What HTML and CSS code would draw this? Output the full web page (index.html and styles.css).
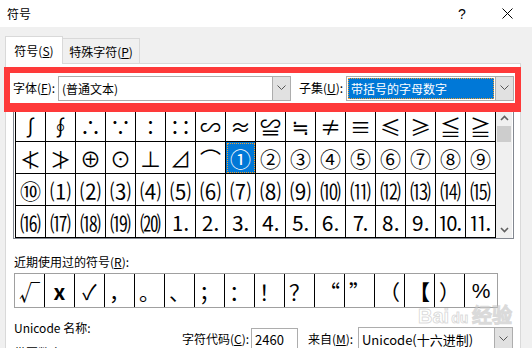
FILE: index.html
```html
<!DOCTYPE html>
<html lang="zh-CN">
<head>
  <meta charset="UTF-8">
  <title>符号</title>
  <link rel="stylesheet" href="styles.css">
</head>
<body>
  <div class="titlebar">
    <span class="title">符号</span>
    <span class="help">?</span>
    <span class="close">
      <svg width="11" height="11" viewBox="0 0 11 11"><path d="M0.5 0.5L10.5 10.5M10.5 0.5L0.5 10.5" stroke="#000" stroke-width="1"/></svg>
    </span>
  </div>

  <div class="tabs">
    <div class="tab active">符号(<u>S</u>)</div>
    <div class="tab">特殊字符(<u>P</u>)</div>
  </div>

  <div class="panel">
    <div class="font-row">
      <span class="lbl font-lbl">字体(<u>F</u>):</span>
      <div class="combo font-combo">
        <span class="combo-text">(普通文本)</span>
        <span class="combo-btn"><svg width="9" height="6" viewBox="0 0 9 6"><path d="M0.5 0.5L4.5 4.5L8.5 0.5" fill="none" stroke="#555" stroke-width="1"/></svg></span>
      </div>
      <span class="lbl subset-lbl">子集(<u>U</u>):</span>
      <div class="combo subset-combo">
        <span class="combo-text"><span class="picked">带括号的字母数字</span></span>
        <span class="combo-btn"><svg width="9" height="6" viewBox="0 0 9 6"><path d="M0.5 0.5L4.5 4.5L8.5 0.5" fill="none" stroke="#555" stroke-width="1"/></svg></span>
      </div>
    </div>

    <div class="symbol-box">
      <div class="symbol-grid">
        <span>∫</span><span>∮</span><span>∴</span><span>∵</span><span>∶</span><span>∷</span><span>∽</span><span>≈</span>
        <span>≌</span><span>≒</span><span>≠</span><span>≡</span><span>≤</span><span>≥</span><span>≦</span><span>≧</span>
        <span>≮</span><span>≯</span><span>⊕</span><span>⊙</span><span>⊥</span><span>⊿</span><span>⌒</span><span class="current">①</span>
        <span>②</span><span>③</span><span>④</span><span>⑤</span><span>⑥</span><span>⑦</span><span>⑧</span><span>⑨</span>
        <span>⑩</span><span>⑴</span><span>⑵</span><span>⑶</span><span>⑷</span><span>⑸</span><span>⑹</span><span>⑺</span>
        <span>⑻</span><span>⑼</span><span>⑽</span><span>⑾</span><span>⑿</span><span>⒀</span><span>⒁</span><span>⒂</span>
        <span>⒃</span><span>⒄</span><span>⒅</span><span>⒆</span><span>⒇</span><span>⒈</span><span>⒉</span><span>⒊</span>
        <span>⒋</span><span>⒌</span><span>⒍</span><span>⒎</span><span>⒏</span><span>⒐</span><span>⒑</span><span>⒒</span>
      </div>
      <div class="scrollbar">
        <span class="sb-btn"><svg width="9" height="6" viewBox="0 0 9 6"><path d="M1 5L4.5 1.5L8 5" fill="none" stroke="#606060" stroke-width="1.6"/></svg></span>
        <span class="sb-thumb"></span>
        <span class="sb-track"></span>
        <span class="sb-btn"><svg width="9" height="6" viewBox="0 0 9 6"><path d="M1 1L4.5 4.5L8 1" fill="none" stroke="#606060" stroke-width="1.6"/></svg></span>
      </div>
    </div>

    <div class="lbl recent-lbl">近期使用过的符号(<u>R</u>):</div>
    <div class="recent">
      <span>√</span><span class="bold">x</span><span>✓</span><span>，</span><span>。</span><span>、</span><span>；</span><span>：</span>
      <span>！</span><span>？</span><span>“</span><span>”</span><span>（</span><span class="bold">【</span><span>）</span><span>%</span>
    </div>

    <div class="bottom">
      <div class="name-col">
        <div class="lbl">Unicode 名称:</div>
        <div class="lbl">带圈数字一</div>
      </div>
      <div class="code-row">
        <span class="lbl code-lbl">字符代码(<u>C</u>):</span>
        <span class="code-input">2460</span>
        <span class="lbl from-lbl">来自(<u>M</u>):</span>
        <div class="combo from-combo">
          <span class="combo-text">Unicode(十六进制)</span>
          <span class="combo-btn"><svg width="9" height="6" viewBox="0 0 9 6"><path d="M0.5 0.5L4.5 4.5L8.5 0.5" fill="none" stroke="#555" stroke-width="1"/></svg></span>
        </div>
      </div>
    </div>

    <div class="watermark">Bai<span class="paw">du</span>经验</div>
  </div>
</body>
</html>
```

FILE: styles.css
```css
body {
  margin: 0;
  width: 532px;
  height: 348px;
  overflow: hidden;
  background-color: #f0f0f0;
  font-family: "Noto Sans CJK SC", sans-serif;
  font-size: 12px;
  color: #000;
}
u {
  text-decoration: underline;
  text-underline-offset: 1px;
}
.titlebar {
  height: 27px;
  background-color: #fff;
  display: flex;
  align-items: center;
  padding-left: 7px;
  padding-right: 10px;
}
.title {
  flex: 1;
}
.help {
  width: 20px;
  text-align: center;
  font-family: "Liberation Sans", sans-serif;
  font-size: 14px;
  margin-right: 20px;
}
.close {
  width: 30px;
  display: flex;
  justify-content: center;
}
.tabs {
  display: flex;
  align-items: flex-end;
  height: 27px;
  margin-top: 9px;
  padding-left: 5px;
}
.tab {
  box-sizing: border-box;
  height: 25px;
  width: 77px;
  border: 1px solid #d9d9d9;
  border-left: none;
  border-bottom: none;
  display: flex;
  align-items: center;
  justify-content: center;
  background-color: #f0f0f0;
}
.tab.active {
  width: 58px;
  height: 28px;
  border-left: 1px solid #d9d9d9;
  background-color: #fff;
  position: relative;
  z-index: 1;
  margin-bottom: -1px;
  padding-bottom: 1px;
}
.panel {
  position: relative;
  margin-left: 5px;
  width: 514px;
  height: 300px;
  border: 1px solid #d9d9d9;
  background-color: #fff;
}
.font-row {
  position: relative;
  z-index: 2;
  display: flex;
  align-items: center;
  height: 30px;
  margin: 3px -1px 0 -2px;
  padding-left: 3px;
  border: 6px solid #fe3a3a;
  border-bottom-width: 9px;
  background-color: #fff;
}
.lbl {
  white-space: nowrap;
  line-height: 16px;
}
.font-lbl {
  width: 45px;
}
.subset-lbl {
  width: 47px;
  margin-left: 8px;
}
.combo {
  box-sizing: border-box;
  height: 25px;
  display: flex;
  border: 1px solid #adadad;
  background-color: #fff;
}
.combo-text {
  flex: 1;
  display: flex;
  align-items: center;
  padding-left: 3px;
  white-space: nowrap;
  overflow: hidden;
}
.combo-btn {
  width: 17px;
  display: flex;
  align-items: center;
  justify-content: center;
  background-color: #e1e1e1;
  border-left: 1px solid #adadad;
}
.font-combo {
  width: 233px;
}
.subset-combo {
  width: 168px;
}
.subset-combo .combo-text {
  padding: 1px;
}
.picked {
  box-sizing: border-box;
  height: 100%;
  width: 100%;
  display: flex;
  align-items: center;
  padding-left: 2px;
  color: #fff;
  background-color: #0078d7;
  border: 1px dotted #f0a030;
}
.symbol-box {
  display: flex;
  width: 498px;
  margin: -4px 0 0 7px;
  padding-left: 1px;
  border: 1px solid #828790;
  background-color: #fff;
}
.symbol-grid {
  display: grid;
  grid-template-columns: repeat(16, 30px);
  grid-auto-rows: 32px;
  border-left: 1px solid #000;
  border-top: 1px solid #000;
  font-family: "Noto Sans CJK SC", "DejaVu Sans", sans-serif;
  font-size: 21px;
}
.symbol-grid span {
  box-sizing: border-box;
  border-right: 1px solid #000;
  border-bottom: 1px solid #000;
  display: flex;
  align-items: center;
  justify-content: center;
  overflow: hidden;
  white-space: nowrap;
}
.symbol-grid span.current {
  color: #fff;
  background-color: #0078d7;
  outline: 1px dotted #f0a030;
  outline-offset: -2px;
}
.scrollbar {
  width: 16px;
  display: flex;
  flex-direction: column;
  background-color: #f0f0f0;
}
.sb-btn {
  height: 17px;
  display: flex;
  align-items: center;
  justify-content: center;
}
.sb-thumb {
  height: 16px;
  margin: 0 1px;
  background-color: #cdcdcd;
}
.sb-track {
  flex: 1;
}
.recent-lbl {
  margin: 15px 0 0 8px;
}
.recent {
  display: flex;
  width: 482px;
  height: 33px;
  margin: 3px 0 0 8px;
  border: 1px solid #a0a0a0;
  font-family: "Noto Sans CJK SC", "DejaVu Sans", sans-serif;
  font-size: 21px;
}
.recent span {
  box-sizing: border-box;
  width: 30px;
  border-right: 1px solid #000;
  display: flex;
  align-items: center;
  justify-content: center;
}
.recent span:last-child {
  flex: 1;
  border-right: none;
  font-family: "Liberation Sans", sans-serif;
}
.recent .bold {
  font-weight: bold;
}
.bottom {
  display: flex;
  align-items: flex-start;
  margin: 12px 0 0 8px;
}
.name-col {
  width: 168px;
  display: flex;
  flex-direction: column;
  gap: 9px;
}
.code-row {
  display: flex;
  align-items: center;
  margin-top: 7px;
}
.code-lbl {
  width: 69px;
}
.code-input {
  box-sizing: border-box;
  width: 47px;
  height: 22px;
  padding-left: 3px;
  display: flex;
  align-items: center;
  border: 1px solid #adadad;
  font-size: 13px;
}
.from-lbl {
  width: 50px;
  margin-left: 10px;
}
.from-combo {
  width: 155px;
  height: 24px;
  font-size: 13px;
}
.watermark {
  position: absolute;
  left: 412px;
  top: 236px;
  font-family: "Liberation Sans", sans-serif;
  font-size: 20px;
  font-weight: bold;
  color: rgba(255, 255, 255, 0.5);
  -webkit-text-stroke: 1px rgba(150, 150, 150, 0.35);
  pointer-events: none;
}
.paw {
  font-size: 14px;
  margin: 0 4px 0 2px;
}
```
